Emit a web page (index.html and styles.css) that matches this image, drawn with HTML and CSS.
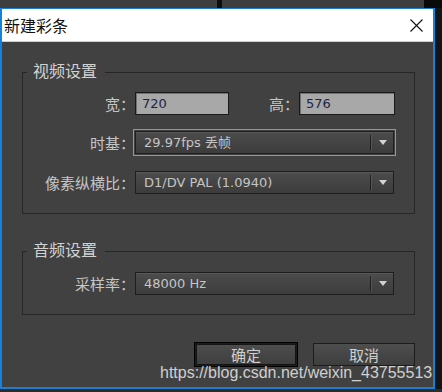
FILE: index.html
```html
<html><head>
<meta charset="utf-8">
<title>新建彩条</title>
<link rel="stylesheet" href="styles.css">
</head>
<body>
<div class="screen">
	<div class="topbar">
		<span class="pane left"></span><span class="split"></span><span class="pane"></span><span class="edge"></span>
	</div>
	<div class="middle">
		<div class="dialog">
			<div class="titlebar">
				<span class="title">新建彩条</span>
				<svg class="close" width="13" height="13" viewBox="0 0 13 13"><path d="M0.5 0.5 L12.5 12.5 M12.5 0.5 L0.5 12.5" stroke="#111" stroke-width="1.1" fill="none"/></svg>
			</div>
			<div class="body">
				<fieldset class="group video">
					<legend>视频设置</legend>
					<div class="row">
						<span class="lbl">宽：</span><div class="input w">720</div>
						<span class="lbl short">高：</span><div class="input h">576</div>
					</div>
					<div class="row">
						<span class="lbl">时基：</span>
						<div class="ring">
							<div class="select"><span class="val">29.97fps 丢帧</span><span class="drop"><i class="tri"></i></span></div>
						</div>
					</div>
					<div class="row third">
						<span class="lbl">像素纵横比：</span>
						<div class="select"><span class="val">D1/DV PAL (1.0940)</span><span class="drop"><i class="tri"></i></span></div>
					</div>
				</fieldset>
				<fieldset class="group audio">
					<legend>音频设置</legend>
					<div class="row">
						<span class="lbl">采样率：</span>
						<div class="select"><span class="val">48000 Hz</span><span class="drop"><i class="tri"></i></span></div>
					</div>
				</fieldset>
				<div class="buttons">
					<button class="btn default">确定</button>
					<button class="btn">取消</button>
				</div>
			</div>
		</div>
		<div class="side"></div>
	</div>
	<div class="bottombar"></div>
	<div class="watermark">https://blog.csdn.net/weixin_43755513</div>
</div>
</body></html>
```

FILE: styles.css
```css
body{margin:0;background-color:#151515;}
.screen{position:relative;width:442px;height:392px;overflow:hidden;font-family:"Noto Sans CJK SC",sans-serif;}
.topbar{display:flex;height:8px;}
.topbar .pane{background-color:#3e3e3e;width:202px;}
.topbar .pane.left{width:217px;}
.topbar .split{width:5px;background-color:#0d0d0d;}
.topbar .edge{flex:1;background-color:#0a0a0a;}
.middle{display:flex;height:381px;}
.side{flex:1;background-color:#141414;}
.bottombar{height:3px;background-color:#2c2c2c;}

.dialog{width:435px;box-sizing:border-box;border:2px solid #1c7fd4;border-top-width:1px;display:flex;flex-direction:column;background-color:#414141;}
.titlebar{height:32px;background-color:white;border-bottom:1px solid #cfcfcf;display:flex;align-items:center;padding-left:2px;}
.title{font-size:16px;color:#111;flex:1;line-height:20px;}
.close{margin-right:10px;}
.body{flex:1;padding:18px 18px 0 20px;}

.group{margin:0;padding:8px 18px 19px 0;border:1px solid #262626;}
.group.audio{margin-top:25px;padding-top:9px;}
.group legend{margin-left:4px;padding:0 8px 4px 6px;font-size:16px;line-height:20px;color:#d2d2d2;}
.video .row + .row{margin-top:16px;}
.video .row.third{margin-top:17px;}
.row{display:flex;align-items:center;height:23px;}
.lbl{width:112px;text-align:right;font-size:15px;line-height:20px;color:#c6c6c6;flex:none;}
.lbl.short{width:70px;}

.input{box-sizing:border-box;height:23px;background-color:#a8a8a8;border:1px solid #191919;box-shadow:inset 1px 1px 0 #707070;padding-left:6px;font:13px/21px "DejaVu Sans","Noto Sans CJK SC",sans-serif;color:#1c2545;}
.input.w{width:94px;}
.input.h{width:96px;}

.ring{border:1px solid #d0940c;padding:1px;margin:0 -2px;}
.select{box-sizing:border-box;width:259px;height:23px;display:flex;border:1px solid #1e1e1e;background:linear-gradient(#4c4c4c,#3c3c3c);box-shadow:inset 0 1px 0 #585858;}
.val{flex:1;padding-left:8px;font:13px/21px "DejaVu Sans","Noto Sans CJK SC",sans-serif;color:#c4c4c4;}
.drop{width:22px;margin:3px 0;border-left:1px solid #1e1e1e;box-shadow:inset 1px 0 0 #555;display:flex;align-items:center;justify-content:center;}
.tri{width:0;height:0;border-left:4px solid transparent;border-right:4px solid transparent;border-top:5px solid #d2d2d2;margin-left:2px;}

.buttons{display:flex;justify-content:flex-end;gap:16px;margin-top:28px;}
.btn{box-sizing:border-box;width:102px;height:23px;padding:0;border:1px solid #1c1c1c;background:linear-gradient(#4e4e4e,#3e3e3e);color:#d0d0d0;font-family:"Noto Sans CJK SC",sans-serif;font-size:15px;line-height:20px;}
.btn.default{outline:1px solid #000;box-shadow:inset 0 0 0 1px #141414;}

.watermark{position:absolute;left:160px;top:364px;font:16px/18px "Liberation Sans",Arial,sans-serif;color:rgba(235,235,235,0.85);white-space:nowrap;}
```
